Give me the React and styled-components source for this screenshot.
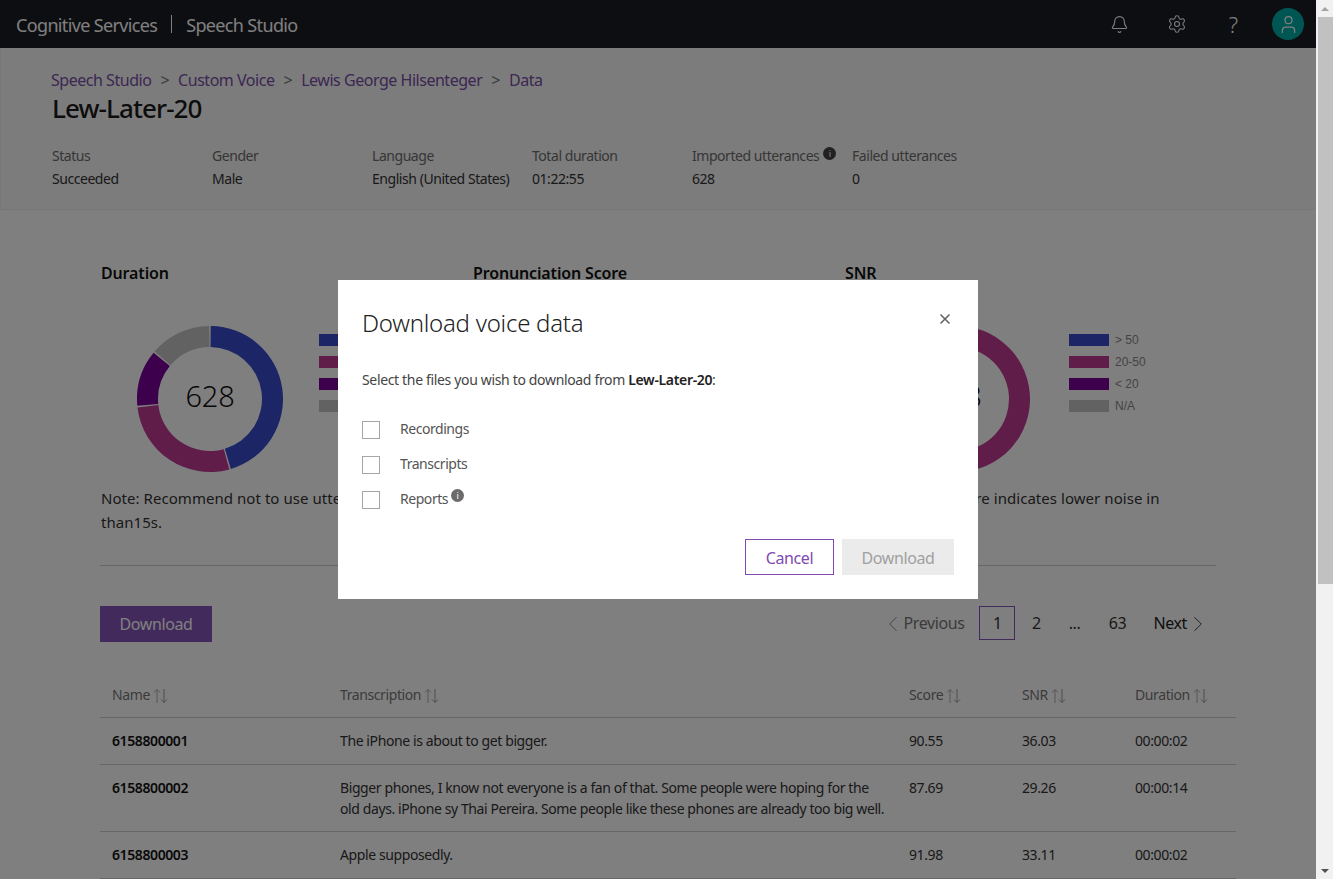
import React from "react";
import styled, { createGlobalStyle } from "styled-components";
import { Bell, Settings, User, ChevronLeft, ChevronRight, X } from "lucide-react";

const FONT = `"Noto Sans", "Open Sans", "Liberation Sans", sans-serif`;

const Global = createGlobalStyle`
  html, body { margin: 0; padding: 0; height: 100%; overflow: hidden; background: #fff; }
  body { font-family: ${FONT}; color: #222; }
  * { box-sizing: border-box; }
`;

const Shell = styled.div`display: flex; width: 1333px; height: 879px; overflow: hidden;`;
const Page = styled.div`position: relative; width: 1316px; height: 879px; overflow: hidden; flex: none;`;

const Scrollbar = styled.div`
  width: 17px; flex: none; background: #f1f1f1; display: flex; flex-direction: column; align-items: center; justify-content: space-between;
`;
const ScrollArrow = styled.div`
  width: 17px; height: 17px; display: flex; align-items: center; justify-content: center;
  &::before { content: ""; border-left: 4px solid transparent; border-right: 4px solid transparent;
    ${p => p.$down ? "border-top: 4px solid #505050;" : "border-bottom: 4px solid #a3a3a3;"} }
`;
const ScrollTrack = styled.div`flex: 1; width: 100%;`;
const ScrollThumb = styled.div`width: 15px; margin-left: 2px; height: 567px; background: #c1c1c1;`;

const TopBar = styled.header`
  height: 48px; background: #1a1c22; display: flex; align-items: center; padding: 0 12px 0 16px; color: #fff;
`;
const Brand = styled.div`font-size: 18px; letter-spacing: -0.65px; color: #fff; white-space: nowrap; padding-top: 2px;`;
const BrandRule = styled.span`display: inline-block; width: 1px; height: 18px; background: #fff; margin: 0 14px 0 14px; vertical-align: -1px;`;
const TopIcons = styled.div`margin-left: auto; display: flex; align-items: center;`;
const TopIcon = styled.div`width: 57px; display: flex; justify-content: center; color: #fff; font-size: 22px; line-height: 24px; font-weight: 300;`;
const Avatar = styled.div`
  width: 32px; height: 32px; border-radius: 50%; background: #00ada5; color: #fff; margin-left: 10px;
  display: flex; align-items: center; justify-content: center;
`;

const Summary = styled.section`
  height: 162px; background: #f8f8f8; border-bottom: 1px solid #eee; border-left: 1px solid #eee; padding: 21px 0 0 51px;
`;
const Crumbs = styled.nav`display: flex; margin-left: -1px; font-size: 16px; line-height: 22px; letter-spacing: -0.47px; color: #7a4ea6;`;
const CrumbSep = styled.span`color: #777; margin: 0 9px;`;
const Title = styled.h1`margin: 1px 0 0; font-size: 26px; line-height: 32px; font-weight: 500; letter-spacing: -0.9px; color: #1a1a1a;`;
const MetaRow = styled.div`display: flex; margin-top: 20px;`;
const Meta = styled.div`width: 160px; font-size: 14px; line-height: 23px; letter-spacing: -0.45px; white-space: nowrap;`;
const MetaLabel = styled.div`color: #6d6d6d; display: flex; align-items: center; gap: 4px;`;
const MetaValue = styled.div`color: #333;`;

const InfoDot = styled.span`
  display: inline-flex; width: 13px; height: 13px; border-radius: 50%; background: ${p => p.$dark ? "#444" : "#6b6b6b"}; color: #fff;
  align-items: center; justify-content: center; font-size: 9px; line-height: 1; font-weight: 400; letter-spacing: 0;
  margin-top: ${p => p.$dark ? "-4px" : "0"};
`;

const Charts = styled.section`
  display: flex; padding: 51px 0 0 101px; height: 355px;
`;
const ChartCol = styled.div`width: 372px; flex: none;`;
const ChartTitle = styled.h2`margin: 0; font-size: 16px; line-height: 24px; font-weight: 600; letter-spacing: -0.15px; color: #111;`;
const ChartBody = styled.div`display: flex; margin: 39px 0 0 ${p => p.$shift}px; height: 150px;`;
const DonutBox = styled.div`position: relative; width: 146px; height: 150px; margin-left: 36px; flex: none;`;
const DonutValue = styled.div`
  position: absolute; inset: 0 0 8px; display: flex; align-items: center; justify-content: center;
  font-size: 29px; font-weight: 300; letter-spacing: -0.2px; color: #111;
`;
const Legend = styled.div`display: flex; flex-direction: column; gap: 10px; margin: 10px 0 0 ${p => 36 + p.$shift}px; font: 12px/12px "Liberation Sans", sans-serif; color: #888;`;
const LegendRow = styled.div`display: flex; align-items: center; gap: 6px; white-space: nowrap; height: 12px;`;
const Swatch = styled.span`width: 40px; height: 12px; background: ${p => p.$c};`;
const Note = styled.p`
  margin: 12px 0 0; width: 340px; font-size: 15px; line-height: 24px; letter-spacing: 0.05px; color: #333; white-space: pre-line;
`;

const Rule = styled.hr`margin: 0 0 0 100px; width: 1116px; border: 0; border-top: 1px solid #ccc;`;

const Toolbar = styled.div`display: flex; align-items: flex-start; justify-content: space-between; padding: 40px 0 0 100px; width: 1216px;`;
const PrimaryBtn = styled.div`
  width: 112px; height: 36px; background: #8654b8; color: #fff; font-size: 16px; letter-spacing: -0.4px;
  display: flex; align-items: center; justify-content: center;
`;
const Pager = styled.div`display: flex; align-items: center; font-size: 16px; letter-spacing: -0.4px; color: #333; height: 34px; margin-right: 7px;`;
const PagerEdge = styled.div`
  display: flex; align-items: center; color: ${p => p.$off ? "#777" : "#222"};
  svg { margin: 1px -2px 0; }
`;
const PageNum = styled.div`
  width: ${p => p.$w || 36}px; height: 34px; display: flex; align-items: center; justify-content: center;
  border: 1px solid ${p => p.$on ? "#8654b8" : "transparent"};
`;
const PagerGap = styled.div`width: ${p => p.$w}px;`;

const Table = styled.div`margin: 42px 0 0 100px; width: 1136px; font-size: 14px; letter-spacing: -0.4px;`;
const Row = styled.div`
  display: grid; grid-template-columns: 228px 569px 113px 113px 1fr; line-height: 21px; border-bottom: 1px solid #ccc;
  padding: ${p => p.$head ? "0 12px 12px" : p.$tall ? "12px 12px 12px" : "12px 12px 13px"};
  color: ${p => p.$head ? "#777" : "#333"};
`;
const NameCell = styled.div`font-weight: 600; color: #111;`;
const HeadCell = styled.div`display: flex; align-items: center; gap: 3px;`;
const TextCell = styled.div`white-space: pre-line;`;

const Overlay = styled.div`
  position: absolute; inset: 0; background: rgba(0,0,0,.5); display: flex; align-items: center; justify-content: center;
`;
const Modal = styled.div`width: 640px; height: 319px; background: #fff; padding: 26px 24px 24px; display: flex; flex-direction: column;`;
const ModalHead = styled.div`display: flex; justify-content: space-between; align-items: flex-start;`;
const ModalTitle = styled.h3`margin: 0; font-size: 24px; line-height: 34px; font-weight: 300; letter-spacing: -0.25px; color: #222;`;
const Close = styled.div`color: #666; margin-top: 5px; width: 18px; height: 16px; display: flex; justify-content: center;`;
const ModalText = styled.p`margin: 30px 0 0; font-size: 14px; line-height: 20px; letter-spacing: -0.34px; color: #444; b { font-weight: 600; color: #222; }`;
const Options = styled.div`display: flex; flex-direction: column; gap: 17px; margin-top: 31px;`;
const Option = styled.label`display: flex; align-items: center; font-size: 14px; letter-spacing: -0.45px; color: #555; height: 18px;`;
const OptionText = styled.span`margin-top: -3px;`;
const Check = styled.span`width: 18px; height: 18px; border: 1px solid #a6a6a6; background: #fff; margin-right: 20px; flex: none;`;
const OptionInfo = styled.span`display: inline-flex; margin: -10px 0 0 3px;`;
const ModalFoot = styled.div`margin-top: auto; display: flex; justify-content: flex-end; gap: 8px;`;
const Btn = styled.div`
  height: 36px; font-size: 16px; letter-spacing: -0.4px; display: flex; align-items: center; justify-content: center; padding-top: 1px;
  width: ${p => p.$w}px;
  ${p => p.$ghost ? "border: 1px solid #7f4bb0; color: #7f4bb0; background: #fff;" : "background: #ebebeb; color: #a0a0a0;"}
`;

function SortIcon() {
  return (
    <svg width="15" height="16" viewBox="0 0 15 16" fill="none" stroke="#aaa" strokeWidth="1" style={{ marginTop: 3 }}>
      <path d="M4 15V1.5M1 4.5l3-3 3 3" />
      <path d="M11 1v13.5M8 11.5l3 3 3-3" stroke="#999" />
    </svg>
  );
}

function polar(a, r) {
  const t = ((a - 90) * Math.PI) / 180;
  return [73 + r * Math.cos(t), 75 + r * Math.sin(t)];
}
function arcPath(a0, a1, rO = 73, rI = 52) {
  const [x0, y0] = polar(a0, rO), [x1, y1] = polar(a1, rO), [x2, y2] = polar(a1, rI), [x3, y3] = polar(a0, rI);
  const l = a1 - a0 > 180 ? 1 : 0;
  return `M${x0} ${y0}A${rO} ${rO} 0 ${l} 1 ${x1} ${y1}L${x2} ${y2}A${rI} ${rI} 0 ${l} 0 ${x3} ${y3}Z`;
}

const C = { blue: "#384acc", purple: "#c23a94", dark: "#7a009a", gray: "#c4c4c4" };
const SWATCHES = [C.blue, C.purple, C.dark, C.gray];

function Donut({ value, parts }) {
  let a = 0;
  return (
    <DonutBox>
      <svg width="146" height="150" viewBox="0 0 146 150">
        {parts.map(([deg, c], i) => {
          const p = <path key={i} d={arcPath(a + 0.6, a + deg - 0.6)} fill={c} />;
          a += deg;
          return p;
        })}
      </svg>
      {value && <DonutValue>{value}</DonutValue>}
    </DonutBox>
  );
}

const chartData = [
  { title: "Duration", value: "628", shift: 0, parts: [[164, C.blue], [100, C.purple], [46, C.dark], [50, C.gray]], legend: ["", "", "", ""],
    note: "Note: Recommend not to use utterances\nthan15s." },
  { title: "Pronunciation Score", shift: 0, parts: [[120, C.blue], [120, C.purple], [60, C.dark], [60, C.gray]], legend: ["", "", "", ""] },
  { title: "SNR", value: "628", shift: 3, parts: [[14, C.blue], [190, C.purple], [100, C.dark], [56, C.gray]], legend: ["> 50", "20-50", "< 20", "N/A"],
    note: "Note: A higher score indicates lower noise in audio." },
];

const rows = [
  ["6158800001", "The iPhone is about to get bigger.", "90.55", "36.03", "00:00:02"],
  ["6158800002", "Bigger phones, I know not everyone is a fan of that. Some people were hoping for the\nold days. iPhone sy Thai Pereira. Some people like these phones are already too big well.", "87.69", "29.26", "00:00:14"],
  ["6158800003", "Apple supposedly.", "91.98", "33.11", "00:00:02"],
];

export default function App() {
  return (
    <Shell>
      <Global />
      <Page>
        <TopBar>
          <Brand>Cognitive Services<BrandRule />Speech Studio</Brand>
          <TopIcons>
            <TopIcon><Bell size={19} strokeWidth={1.4} /></TopIcon>
            <TopIcon><Settings size={20} strokeWidth={1.3} /></TopIcon>
            <TopIcon>?</TopIcon>
            <Avatar><User size={21} strokeWidth={1.4} /></Avatar>
          </TopIcons>
        </TopBar>
        <Summary>
          <Crumbs>
            <span>Speech Studio</span><CrumbSep>&gt;</CrumbSep>
            <span>Custom Voice</span><CrumbSep>&gt;</CrumbSep>
            <span>Lewis George Hilsenteger</span><CrumbSep>&gt;</CrumbSep>
            <span>Data</span>
          </Crumbs>
          <Title>Lew-Later-20</Title>
          <MetaRow>
            <Meta><MetaLabel>Status</MetaLabel><MetaValue>Succeeded</MetaValue></Meta>
            <Meta><MetaLabel>Gender</MetaLabel><MetaValue>Male</MetaValue></Meta>
            <Meta><MetaLabel>Language</MetaLabel><MetaValue>English (United States)</MetaValue></Meta>
            <Meta><MetaLabel>Total duration</MetaLabel><MetaValue>01:22:55</MetaValue></Meta>
            <Meta><MetaLabel>Imported utterances <InfoDot $dark>i</InfoDot></MetaLabel><MetaValue>628</MetaValue></Meta>
            <Meta><MetaLabel>Failed utterances</MetaLabel><MetaValue>0</MetaValue></Meta>
          </MetaRow>
        </Summary>
        <Charts>
          {chartData.map(c => (
            <ChartCol key={c.title}>
              <ChartTitle>{c.title}</ChartTitle>
              <ChartBody $shift={c.shift}>
                <Donut value={c.value} parts={c.parts} />
                <Legend $shift={c.shift}>
                  {c.legend.map((l, i) => (
                    <LegendRow key={i}><Swatch $c={SWATCHES[i]} />{l}</LegendRow>
                  ))}
                </Legend>
              </ChartBody>
              {c.note && <Note>{c.note}</Note>}
            </ChartCol>
          ))}
        </Charts>
        <Rule />
        <Toolbar>
          <PrimaryBtn>Download</PrimaryBtn>
          <Pager>
            <PagerEdge $off><ChevronLeft size={26} strokeWidth={0.8} />Previous</PagerEdge>
            <PagerGap $w={15} />
            <PageNum $on>1</PageNum>
            <PageNum $w={42}>2</PageNum>
            <PageNum $w={34}>...</PageNum>
            <PageNum $w={52}>63</PageNum>
            <PagerGap $w={10} />
            <PagerEdge>Next<ChevronRight size={26} strokeWidth={0.8} /></PagerEdge>
          </Pager>
        </Toolbar>
        <Table>
          <Row $head>
            {["Name", "Transcription", "Score", "SNR", "Duration"].map(h => (
              <HeadCell key={h}>{h}<SortIcon /></HeadCell>
            ))}
          </Row>
          {rows.map(r => (
            <Row key={r[0]} $tall={r[1].includes("\n")}>
              <NameCell>{r[0]}</NameCell>
              <TextCell>{r[1]}</TextCell>
              <div>{r[2]}</div>
              <div>{r[3]}</div>
              <div>{r[4]}</div>
            </Row>
          ))}
        </Table>
        <Overlay>
          <Modal>
            <ModalHead>
              <ModalTitle>Download voice data</ModalTitle>
              <Close><X size={16} strokeWidth={2.5} /></Close>
            </ModalHead>
            <ModalText>Select the files you wish to download from <b>Lew-Later-20</b>:</ModalText>
            <Options>
              <Option><Check /><OptionText>Recordings</OptionText></Option>
              <Option><Check /><OptionText>Transcripts</OptionText></Option>
              <Option><Check /><OptionText>Reports</OptionText><OptionInfo><InfoDot>i</InfoDot></OptionInfo></Option>
            </Options>
            <ModalFoot>
              <Btn $ghost $w={89}>Cancel</Btn>
              <Btn $w={112}>Download</Btn>
            </ModalFoot>
          </Modal>
        </Overlay>
      </Page>
      <Scrollbar>
        <ScrollArrow />
        <ScrollTrack><ScrollThumb /></ScrollTrack>
        <ScrollArrow $down />
      </Scrollbar>
    </Shell>
  );
}
